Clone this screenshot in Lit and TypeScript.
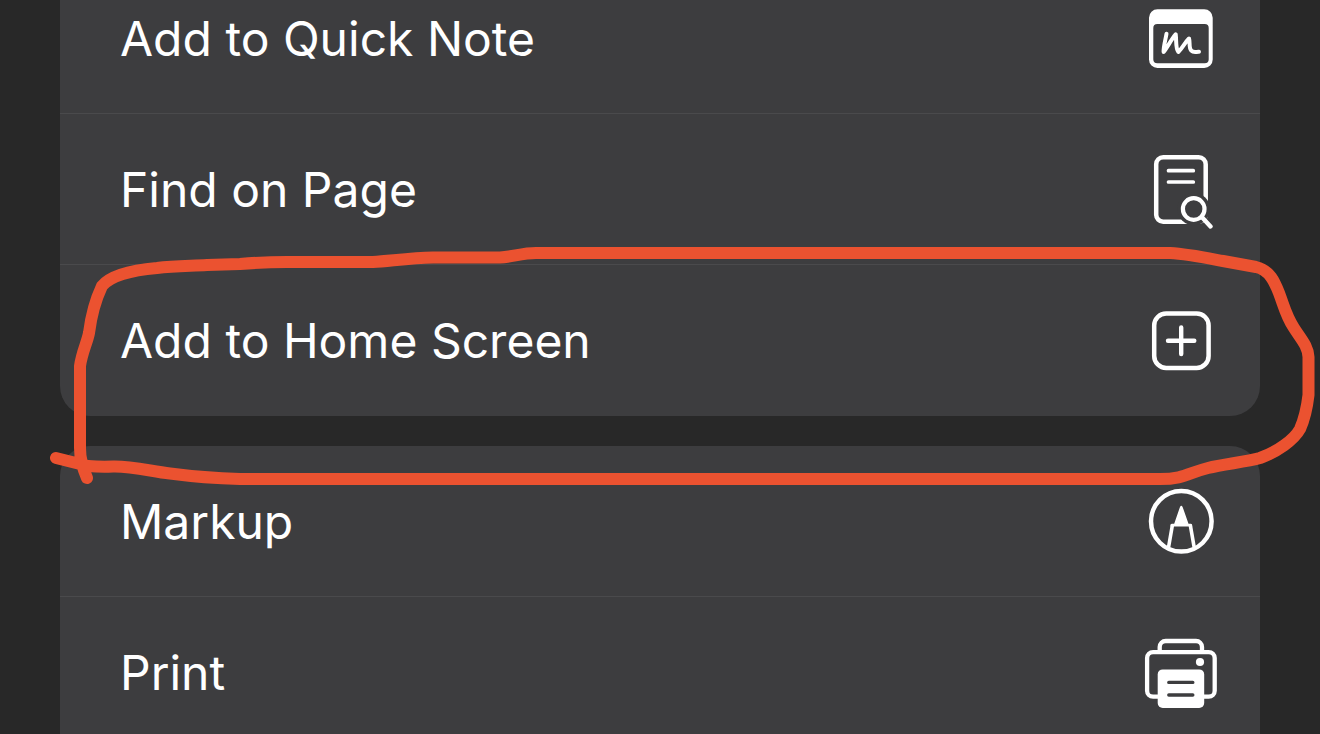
import { LitElement, html, css, svg, type SVGTemplateResult } from "lit";
import { customElement, property } from "lit/decorators.js";

const icons: Record<string, SVGTemplateResult> = {
  note: svg`
    <path fill="currentColor" fill-rule="evenodd" d="M16.500 11.300H63.200a8.500 8.500 0 0 1 8.500 8.500V61.500a8.500 8.500 0 0 1 -8.500 8.500H16.500a8.500 8.500 0 0 1 -8.500 -8.500V19.800a8.500 8.500 0 0 1 8.500 -8.500zM16.300 26a4 4 0 0 0 -4 4V61.300a4 4 0 0 0 4 4H63.700a4 4 0 0 0 4 -4V30a4 4 0 0 0 -4 -4z"/>
    <path stroke-width="4" d="M25.500 35.800C24.500 42 22.500 48 22.600 54C26.500 49 30 42 34.700 36.300C35.500 42 34.500 51 37.300 54C41 50.500 44 44.500 48 40.500C49.300 44 47.500 49.500 50.300 52.600C52.800 55.300 55.500 53.500 58 53.800"/>`,
  find: svg`
    <rect x="15.200" y="8.200" width="49.500" height="64.500" rx="7" stroke-width="4.500"/>
    <circle class="gap" cx="52.700" cy="60" r="16.300"/>
    <path stroke-width="3.700" d="M27.500 21.700H52.300M27.500 33H52.300"/>
    <circle cx="52.700" cy="60" r="10.800" stroke-width="4.200"/>
    <path stroke-width="4.400" d="M61 68.300L69.500 77.500"/>`,
  home: svg`
    <rect x="13.200" y="13.500" width="54.400" height="54.400" rx="12" stroke-width="4.500"/>
    <path stroke-width="4.400" d="M27 40.700H53.300M40.200 27.500V54"/>`,
  markup: svg`
    <circle cx="40.300" cy="40.300" r="30.300" stroke-width="4.500"/>
    <path fill="currentColor" d="M38.900 26.200Q40.300 23.500 41.700 26.200L47.500 42.700H50Q51.200 42.700 51.200 45.500H29.500Q29.500 42.700 30.700 42.700H33.200z"/>
    <path stroke-width="3.600" stroke-linecap="butt" d="M31.500 43.500L27.500 66.500M49.200 43.500L53.200 66.500"/>`,
  print: svg`
    <rect x="6.100" y="20.100" width="67.600" height="44.600" rx="6" stroke-width="4.300"/>
    <path stroke-width="4.300" stroke-linecap="butt" d="M18.700 20V15a6 6 0 0 1 6 -6H55a6 6 0 0 1 6 6V20"/>
    <circle cx="59" cy="30" r="4.100" fill="currentColor"/>
    <rect x="16.700" y="37.400" width="46.500" height="38.600" rx="5" fill="currentColor"/>
    <path class="cut" stroke-width="3.400" d="M27.800 50.400H51.800M27.800 63H51.800"/>`,
};

@customElement("action-row")
class ActionRow extends LitElement {
  @property() label = "";
  @property() icon = "";

  static styles = css`
    :host {
      display: block;
    }
    .row {
      display: flex;
      align-items: center;
      justify-content: space-between;
      width: 100%;
      height: 150px;
      margin: 0;
      padding: 0 39px 0 60px;
      border: 0;
      background: none;
      color: #fff;
      font: 400 48px/60px Inter, "Liberation Sans", sans-serif;
      text-align: left;
      cursor: pointer;
    }
    .row:focus-visible {
      outline: 3px solid #8a8a8e;
      outline-offset: -3px;
    }
    .label {
      padding-top: 2px;
      white-space: nowrap;
    }
    .icon {
      flex: none;
      width: 80px;
      height: 80px;
      fill: none;
      stroke: currentColor;
      stroke-width: 0;
      stroke-linecap: round;
      stroke-linejoin: round;
    }
    .gap {
      fill: #3d3d3f;
    }
    .cut {
      stroke: #3d3d3f;
    }
  `;

  render() {
    return html`<button class="row" type="button">
      <span class="label">${this.label}</span>
      <svg class="icon" viewBox="0 0 80 80" aria-hidden="true">${icons[this.icon]}</svg>
    </button>`;
  }
}

@customElement("app-root")
class AppRoot extends LitElement {
  static styles = css`
    :host {
      display: block;
    }
    .page {
      position: relative;
      height: 100vh;
      overflow: hidden;
      background: #282828;
    }
    .sheet {
      display: flex;
      flex-direction: column;
      gap: 30px;
      margin-top: -37px;
      padding: 0 60px;
    }
    .group {
      margin: 0;
      padding: 0;
      list-style: none;
      border-radius: 30px;
      background: #3d3d3f;
    }
    .group:last-child {
      border-radius: 30px 30px 0 0;
    }
    .item {
      border-bottom: 1px solid #4a4a4c;
    }
    .item:last-child {
      border-bottom-color: transparent;
    }
    .ink {
      position: absolute;
      top: 0;
      left: 0;
      width: 100%;
      height: 734px;
      fill: none;
      stroke: #eb5230;
      stroke-width: 12;
      stroke-linecap: round;
      stroke-linejoin: round;
      pointer-events: none;
    }
  `;

  private groups = [
    [
      { label: "Add to Quick Note", icon: "note" },
      { label: "Find on Page", icon: "find" },
      { label: "Add to Home Screen", icon: "home" },
    ],
    [
      { label: "Markup", icon: "markup" },
      { label: "Print", icon: "print" },
    ],
  ];

  render() {
    return html`<main class="page">
      <div class="sheet">
        ${this.groups.map(
          (group) => html`<ul class="group">
            ${group.map(
              (a) => html`<li class="item">
                <action-row .label=${a.label} .icon=${a.icon}></action-row>
              </li>`
            )}
          </ul>`
        )}
      </div>
      <svg class="ink" viewBox="0 0 1320 734" preserveAspectRatio="none" aria-hidden="true">
        <path
          d="M87 478Q80 462 80 448V366C82 352 87 343 89 333C91 317 94 303 102 286C111 275 134 270 157 268C174 266 190 266 207 265L240 264Q264 262 287 262H373C390 261 410 258 433 257.500H500C512 257 522 253 536 253H1170C1188 254 1207 258 1223 261L1256 267C1270 270 1275 283 1279 293C1284 306 1286 316 1294 328C1301 339 1308 346 1308.500 357V395C1307 408 1304 420 1300 429C1294 440 1277 452 1260 458C1246 462 1224 464 1208 468C1188 473 1184 479 1160 479H240Q204 478 170 473.500C150 471 131 466 113 466.500Q100 467 88 466L56 458"
        />
      </svg>
    </main>`;
  }
}
